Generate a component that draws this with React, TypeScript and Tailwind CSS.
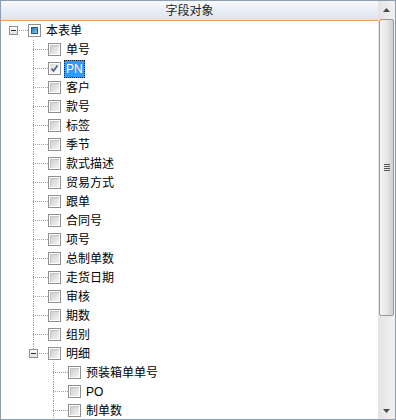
import React from "react";

type Row = {
  label: string;
  guides: boolean[];
  lineUp: boolean;
  lineDown: boolean;
  expander?: boolean;
  state: "none" | "checked" | "partial";
  selected?: boolean;
};

const level1 = ["单号", "PN", "客户", "款号", "标签", "季节", "款式描述", "贸易方式", "跟单", "合同号", "项号", "总制单数", "走货日期", "审核", "期数", "组别"];
const level2 = ["预装箱单单号", "PO", "制单数"];

const rows: Row[] = [
  { label: "本表单", guides: [], lineUp: false, lineDown: false, expander: true, state: "partial" },
  ...level1.map((l) => ({ label: l, guides: [false], lineUp: true, lineDown: true, state: (l === "PN" ? "checked" : "none") as Row["state"], selected: l === "PN" })),
  { label: "明细", guides: [false], lineUp: true, lineDown: false, expander: true, state: "none" },
  ...level2.map((l) => ({ label: l, guides: [false, false], lineUp: true, lineDown: true, state: "none" as Row["state"] })),
];

function Checkbox({ state }: { state: Row["state"] }) {
  return (
    <div className="relative w-[13px] h-[13px] shrink-0 border border-[#8e8f8f] bg-white p-[1px]">
      {state === "partial" ? (
        <div className="w-full h-full p-[1px] bg-white">
          <div className="w-full h-full border border-[#1d5e98] bg-gradient-to-br from-[#2a78bb] to-[#7fcbef]" />
        </div>
      ) : state === "checked" ? (
        <div className="w-full h-full bg-gradient-to-br from-[#dcdcdc] to-[#fafafa]" />
      ) : (
        <div className="w-full h-full border-t border-l border-[#c4c4c4] bg-gradient-to-br from-[#d0d0d0] to-[#f4f4f4]" />
      )}
      {state === "checked" && (
        <svg className="absolute left-0 top-0" width="11" height="11" viewBox="0 0 11 11">
          <path d="M2.5 5.5 L4.5 8 L8.5 2.5" stroke="#4b5a86" strokeWidth="1.5" fill="none" />
        </svg>
      )}
    </div>
  );
}

function TreeRow({ row }: { row: Row }) {
  return (
    <div className="flex h-[19px] items-center shrink-0">
      <div className="w-[2px] h-full shrink-0" />
      {row.guides.map((g, i) => (
        <div key={i} className="w-[20px] h-full shrink-0 pl-[10px]">
          {g && <div className="h-full border-l border-dotted border-[#a0a0a0]" />}
        </div>
      ))}
      <div className="relative w-[25px] h-full shrink-0 flex">
        <div className="w-[10px] h-full shrink-0" />
        <div className="flex-1 flex flex-col">
          <div className={"h-[9px] " + (row.lineUp ? "border-l border-dotted border-[#a0a0a0]" : "")} />
          <div className={"flex-1 border-t border-dotted border-[#a0a0a0] " + (row.lineDown ? "border-l" : "")} />
        </div>
        {row.expander && (
          <div className="absolute left-[6px] top-[5px] w-[9px] h-[9px] border border-[#919191] bg-gradient-to-b from-white to-[#e2e2e2] flex items-center justify-center">
            <div className="w-[5px] h-[1px] bg-[#2b2b2b]" />
          </div>
        )}
      </div>
      <Checkbox state={row.state} />
      <div
        className={
          "ml-[3px] h-[18px] leading-[18px] px-[2px] text-[12px] whitespace-nowrap " +
          (row.selected ? "bg-[#3399ff] text-white outline outline-1 outline-dotted outline-[#222] -outline-offset-1" : "text-black")
        }
      >
        {row.label}
      </div>
    </div>
  );
}

export default function App() {
  return (
    <div
      className="w-[396px] h-[420px] border border-[#8d9db2] flex overflow-hidden bg-white"
      style={{ fontFamily: '"Liberation Sans", "Noto Sans CJK SC", sans-serif' }}
    >
      <div className="flex-1 flex flex-col min-w-0">
        <div className="h-[20px] shrink-0 border-b border-[#eb9e55] bg-gradient-to-b from-[#f7f9fc] to-[#dbe4ef] flex items-center justify-center text-[12px] text-[#1f1f1f]">
          字段对象
        </div>
        <div className="flex-1 flex flex-col overflow-hidden">
          {rows.map((r, i) => (
            <TreeRow key={i} row={r} />
          ))}
        </div>
      </div>
      <div className="w-[17px] shrink-0 flex flex-col bg-gradient-to-r from-[#e4e4e4] to-[#f1f1f1]">
        <div className="h-[17px] shrink-0 flex items-center justify-center">
          <svg width="7" height="4" viewBox="0 0 7 4">
            <polygon points="3.5,0 7,4 0,4" fill="#4a4a4a" />
          </svg>
        </div>
        <div className="mt-[1px] mx-[1px] h-[297px] shrink-0 rounded-[2px] border border-[#9a9a9a] bg-gradient-to-r from-[#f4f4f4] via-[#e8e8e8] to-[#cfcfcf] flex flex-col items-center justify-center">
          <div className="flex flex-col gap-[1px]">
            <div className="w-[6px] h-[1px] bg-[#555]" />
            <div className="w-[6px] h-[1px] bg-[#555]" />
            <div className="w-[6px] h-[1px] bg-[#555]" />
            <div className="w-[6px] h-[1px] bg-[#555]" />
          </div>
        </div>
        <div className="flex-1" />
        <div className="h-[17px] shrink-0 flex items-center justify-center">
          <svg width="7" height="4" viewBox="0 0 7 4">
            <polygon points="0,0 7,0 3.5,4" fill="#4a4a4a" />
          </svg>
        </div>
      </div>
    </div>
  );
}
